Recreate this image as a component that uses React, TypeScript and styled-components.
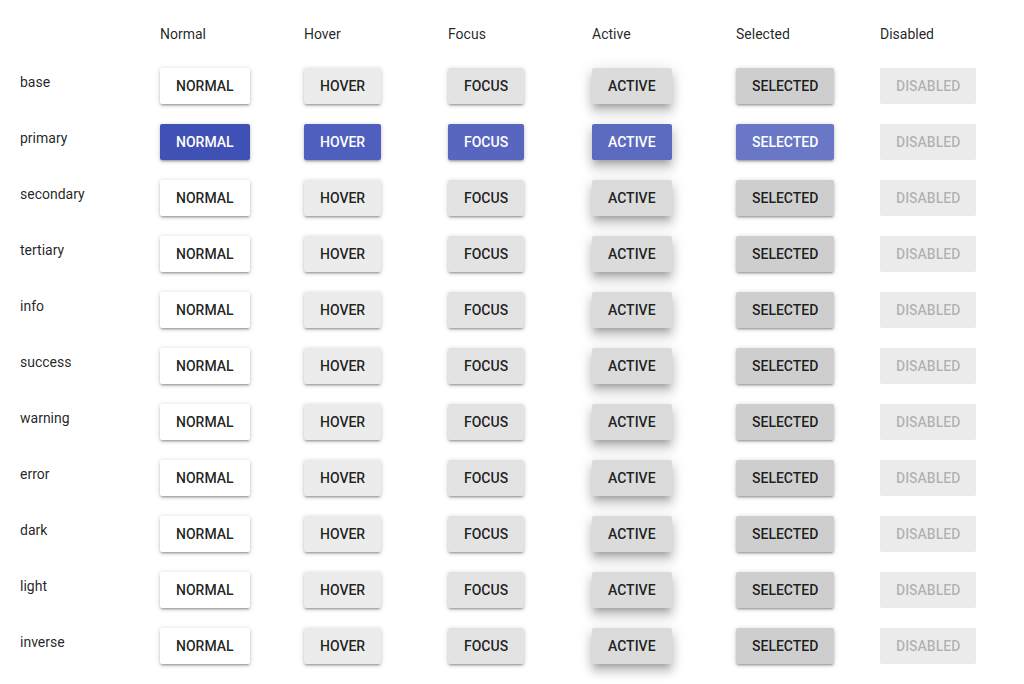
import React from "react";
import styled, { createGlobalStyle, css } from "styled-components";

const Global = createGlobalStyle`
  html, body { margin: 0; padding: 0; background: #fff; }
  body { font-family: Roboto, "Noto Sans", Arial, sans-serif; color: rgba(0,0,0,0.87); }
`;

type State = "normal" | "hover" | "focus" | "active" | "selected" | "disabled";

const states: { key: State; label: string }[] = [
  { key: "normal", label: "Normal" },
  { key: "hover", label: "Hover" },
  { key: "focus", label: "Focus" },
  { key: "active", label: "Active" },
  { key: "selected", label: "Selected" },
  { key: "disabled", label: "Disabled" },
];

const variants = [
  "base",
  "primary",
  "secondary",
  "tertiary",
  "info",
  "success",
  "warning",
  "error",
  "dark",
  "light",
  "inverse",
];

const neutralBg: Record<State, string> = {
  normal: "#ffffff",
  hover: "#ececec",
  focus: "#e3e3e3",
  active: "#dbdbdb",
  selected: "#cecece",
  disabled: "#ebebeb",
};

const primaryBg: Record<State, string> = {
  normal: "#3f51b5",
  hover: "#4f5fbd",
  focus: "#5866c0",
  active: "#5c6bc0",
  selected: "#6a77c7",
  disabled: "#ebebeb",
};

const elev2 =
  "0 1px 5px 0 rgba(0,0,0,0.2), 0 2px 2px 0 rgba(0,0,0,0.14), 0 3px 1px -2px rgba(0,0,0,0.12)";
const elev8 =
  "0 5px 5px -3px rgba(0,0,0,0.2), 0 8px 10px 1px rgba(0,0,0,0.14), 0 3px 14px 2px rgba(0,0,0,0.12)";

const Page = styled.div`
  padding: 24px 0 20px 20px;
`;

const Grid = styled.div`
  display: grid;
  grid-template-columns: 140px repeat(6, 144px);
  row-gap: 20px;
  align-items: start;
`;

const HeadCell = styled.div`
  height: 24px;
  font-size: 14px;
  line-height: 20px;
  font-weight: 400;
`;

const RowLabel = styled.div`
  height: 36px;
  padding-top: 6px;
  box-sizing: border-box;
  font-size: 14px;
  line-height: 16px;
`;

const Cell = styled.div`
  display: flex;
  align-items: flex-start;
`;

const Btn = styled.button<{ $state: State; $primary: boolean }>`
  height: 36px;
  padding: 0 16px;
  border: none;
  border-radius: 2px;
  font-family: Roboto, Arial, sans-serif;
  font-size: 14px;
  font-weight: 500;
  letter-spacing: 0;
  text-transform: uppercase;
  cursor: pointer;
  outline: none;
  background: ${(p) => (p.$primary ? primaryBg[p.$state] : neutralBg[p.$state])};
  color: ${(p) =>
    p.$state === "disabled"
      ? "rgba(0,0,0,0.26)"
      : p.$primary
      ? "#ffffff"
      : "rgba(0,0,0,0.87)"};
  box-shadow: ${(p) =>
    p.$state === "disabled" ? "none" : p.$state === "active" ? elev8 : elev2};
  ${(p) =>
    p.$state === "disabled" &&
    css`
      cursor: default;
    `}
`;

export default function App() {
  return (
    <Page>
      <Global />
      <Grid>
        <HeadCell />
        {states.map((s) => (
          <HeadCell key={s.key}>{s.label}</HeadCell>
        ))}
        {variants.map((v) => (
          <React.Fragment key={v}>
            <RowLabel>{v}</RowLabel>
            {states.map((s) => (
              <Cell key={s.key}>
                <Btn $state={s.key} $primary={v === "primary"} disabled={s.key === "disabled"}>
                  {s.key}
                </Btn>
              </Cell>
            ))}
          </React.Fragment>
        ))}
      </Grid>
    </Page>
  );
}
